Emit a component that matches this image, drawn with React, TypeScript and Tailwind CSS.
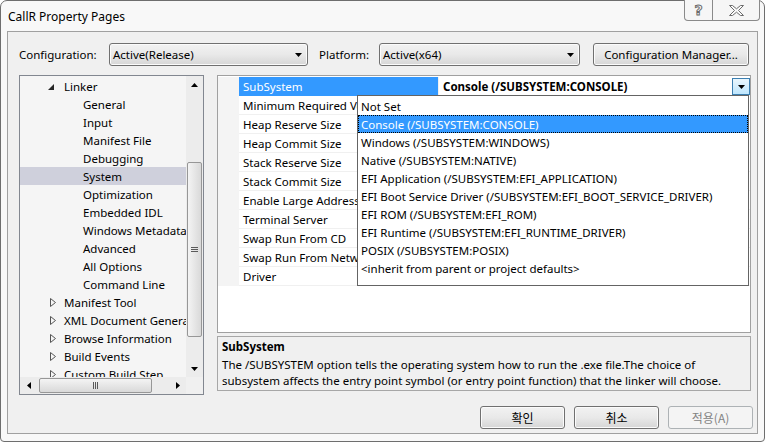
import React from "react";

const F = "font-['Noto_Sans','Noto_Sans_CJK_KR',sans-serif]";

function DownTri({ className = "" }: { className?: string }) {
  return (
    <svg width="7" height="4" viewBox="0 0 7 4" className={className}>
      <polygon points="0,0 7,0 3.5,4" fill="#000" />
    </svg>
  );
}

function UpTri() {
  return (
    <svg width="7" height="4" viewBox="0 0 7 4">
      <polygon points="0,4 7,4 3.5,0" fill="#000" />
    </svg>
  );
}

function LeftTri() {
  return (
    <svg width="4" height="7" viewBox="0 0 4 7">
      <polygon points="4,0 4,7 0,3.5" fill="#000" />
    </svg>
  );
}

function RightTri() {
  return (
    <svg width="4" height="7" viewBox="0 0 4 7">
      <polygon points="0,0 0,7 4,3.5" fill="#000" />
    </svg>
  );
}

function Combo({ text, w }: { text: string; w: string }) {
  return (
    <div
      className={`${w} h-[23px] rounded-[3px] border border-[#707070] bg-gradient-to-b from-[#f2f2f2] via-[#e9e9e9] to-[#d6d6d6] shadow-[inset_0_0_0_1px_#fbfbfb] flex items-center justify-between pl-[3px] pr-[5px] pt-[1px]`}
    >
      <span className="leading-none">{text}</span>
      <DownTri />
    </div>
  );
}

function WinButton({ label, w, disabled }: { label: string; w: string; disabled?: boolean }) {
  return (
    <div
      className={`${w} h-[23px] rounded-[3px] border flex items-center justify-center pt-[1px] ${
        disabled
          ? "border-[#adb2b5] bg-[#f4f4f4] text-[#838383]"
          : "border-[#707070] bg-gradient-to-b from-[#f2f2f2] via-[#e9e9e9] to-[#d6d6d6] shadow-[inset_0_0_0_1px_#fbfbfb] text-black"
      }`}
    >
      <span className="leading-none">{label}</span>
    </div>
  );
}

type TreeItem = { t: string; lvl: 1 | 2; exp?: "open" | "closed"; sel?: boolean };

const tree: TreeItem[] = [
  { t: "Linker", lvl: 1, exp: "open" },
  { t: "General", lvl: 2 },
  { t: "Input", lvl: 2 },
  { t: "Manifest File", lvl: 2 },
  { t: "Debugging", lvl: 2 },
  { t: "System", lvl: 2, sel: true },
  { t: "Optimization", lvl: 2 },
  { t: "Embedded IDL", lvl: 2 },
  { t: "Windows Metadata", lvl: 2 },
  { t: "Advanced", lvl: 2 },
  { t: "All Options", lvl: 2 },
  { t: "Command Line", lvl: 2 },
  { t: "Manifest Tool", lvl: 1, exp: "closed" },
  { t: "XML Document Generator", lvl: 1, exp: "closed" },
  { t: "Browse Information", lvl: 1, exp: "closed" },
  { t: "Build Events", lvl: 1, exp: "closed" },
  { t: "Custom Build Step", lvl: 1, exp: "closed" },
];

const props = [
  "SubSystem",
  "Minimum Required Version",
  "Heap Reserve Size",
  "Heap Commit Size",
  "Stack Reserve Size",
  "Stack Commit Size",
  "Enable Large Addresses",
  "Terminal Server",
  "Swap Run From CD",
  "Swap Run From Network",
  "Driver",
];

const options = [
  "Not Set",
  "Console (/SUBSYSTEM:CONSOLE)",
  "Windows (/SUBSYSTEM:WINDOWS)",
  "Native (/SUBSYSTEM:NATIVE)",
  "EFI Application (/SUBSYSTEM:EFI_APPLICATION)",
  "EFI Boot Service Driver (/SUBSYSTEM:EFI_BOOT_SERVICE_DRIVER)",
  "EFI ROM (/SUBSYSTEM:EFI_ROM)",
  "EFI Runtime (/SUBSYSTEM:EFI_RUNTIME_DRIVER)",
  "POSIX (/SUBSYSTEM:POSIX)",
  "<inherit from parent or project defaults>",
];

function Tree() {
  return (
    <div className="w-[185px] h-[320px] border border-[#828790] bg-[#f5f5f5] flex flex-col shrink-0">
      <div className="flex h-[301px]">
        <div className="flex-1 overflow-hidden pt-[1px]">
          {tree.map((it) => (
            <div
              key={it.t}
              className={`h-[18px] flex items-center whitespace-nowrap relative pt-[2px] ${
                it.lvl === 1 ? "pl-[44px]" : "pl-[63px]"
              } ${it.sel ? "bg-[#cfd0dc]" : ""}`}
            >
              {it.exp === "open" && (
                <svg width="6" height="6" viewBox="0 0 6 6" className="absolute left-[28px] top-[7px]">
                  <polygon points="6,0 6,6 0,6" fill="#262626" />
                </svg>
              )}
              {it.exp === "closed" && (
                <svg width="6" height="9" viewBox="0 0 6 9" className="absolute left-[30px] top-[5px]">
                  <polygon points="0.5,0.5 0.5,8.5 5.5,4.5" fill="none" stroke="#555" strokeWidth="1" />
                </svg>
              )}
              <span className="leading-none">{it.t}</span>
            </div>
          ))}
        </div>
        <div className="w-[17px] h-full bg-[#ececec] flex flex-col">
          <div className="h-[17px] flex items-center justify-center">
            <UpTri />
          </div>
          <div className="h-[69px]" />
          <div className="h-[175px] mx-[1px] rounded-[2px] border border-[#979797] bg-gradient-to-r from-[#f4f4f4] to-[#d9d9d9] flex flex-col items-center justify-center gap-[1px]">
            <div className="w-[7px] h-px bg-[#5a5a5a]" />
            <div className="w-[7px] h-px bg-[#5a5a5a]" />
            <div className="w-[7px] h-px bg-[#5a5a5a]" />
          </div>
          <div className="flex-1" />
          <div className="h-[17px] flex items-center justify-center">
            <DownTri />
          </div>
        </div>
      </div>
      <div className="flex h-[17px]">
        <div className="flex-1 flex bg-[#ececec]">
          <div className="w-[17px] flex items-center justify-center">
            <LeftTri />
          </div>
          <div className="w-[2px]" />
          <div className="w-[113px] my-[1px] rounded-[2px] border border-[#979797] bg-gradient-to-b from-[#f4f4f4] to-[#d9d9d9] flex items-center justify-center gap-[1px]">
            <div className="h-[7px] w-px bg-[#5a5a5a]" />
            <div className="h-[7px] w-px bg-[#5a5a5a]" />
            <div className="h-[7px] w-px bg-[#5a5a5a]" />
          </div>
          <div className="flex-1" />
          <div className="w-[17px] flex items-center justify-center">
            <RightTri />
          </div>
        </div>
        <div className="w-[17px] bg-[#f0f0f0]" />
      </div>
    </div>
  );
}

function Grid() {
  return (
    <div className="relative h-[258px] border border-[#a0a0a0] bg-white pt-[1px]">
      {props.map((p, i) => {
        const sel = i === 0;
        return (
          <div key={p} className="flex h-[19px]">
            <div className="w-[21px] h-full bg-[#f4f4f4]" />
            <div
              className={`w-[199px] h-full flex items-center pl-[4px] pt-[2px] whitespace-nowrap overflow-hidden border-b ${
                sel ? "bg-[#3399ff] text-white border-[#3399ff]" : "border-[#f0f0f0]"
              }`}
            >
              <span className="leading-none">{p}</span>
            </div>
            <div className="w-px h-full bg-[#f0f0f0]" />
            <div className="flex-1 h-full border-b border-[#f0f0f0] flex items-center justify-between pl-[4px]">
              {sel && (
                <>
                  <span className="leading-none font-bold pt-[2px]">Console (/SUBSYSTEM:CONSOLE)</span>
                  <div className="w-[18px] h-[17px] self-start mt-[1px] border border-[#3c7fb1] bg-gradient-to-b from-[#eaf6fd] to-[#bee6fd] flex items-center justify-center">
                    <DownTri />
                  </div>
                </>
              )}
            </div>
          </div>
        );
      })}
      <div className="absolute left-[139px] top-[19px] w-[392px] h-[191px] border border-[#646464] bg-white pt-[1px]">
        {options.map((o, i) => (
          <div
            key={o}
            className={`h-[18px] flex items-center pl-[3px] pt-[2px] whitespace-nowrap ${
              i === 1 ? "bg-[#3399ff] text-white outline-1 outline-dotted outline-black -outline-offset-1" : ""
            }`}
          >
            <span className="leading-none">{o}</span>
          </div>
        ))}
      </div>
    </div>
  );
}

export default function App() {
  return (
    <div className={`w-[770px] h-[443px] bg-white overflow-hidden text-[11.5px] text-black ${F}`}>
      <div className="relative w-[765px] h-[442px] rounded-t-[7px] rounded-b-[4px] border border-[#6e6e6e] bg-[#f8f8f8] flex flex-col">
        <div className="h-[30px] shrink-0 flex items-center pl-[7px] pt-[1px] text-[12px] text-black">
          CallR Property Pages
        </div>
        <div className="absolute top-[-1px] right-[4px] h-[21px] flex border border-t-0 border-[#8a8a8a] rounded-b-[4px] bg-[#f6f6f6] overflow-hidden">
          <div className="w-[28px] flex items-center justify-center border-r border-[#8a8a8a]">
            <span className="text-[14px] font-bold leading-none text-transparent [-webkit-text-stroke:1px_#6b6b6b] font-['DejaVu_Sans',sans-serif]">
              ?
            </span>
          </div>
          <div className="w-[46px] flex items-center justify-center">
            <svg width="15" height="11" viewBox="0 0 15 11">
              <polygon
                points="0.5,0.5 3.5,0.5 7.5,3.8 11.5,0.5 14.5,0.5 9.5,5.5 14.5,10.5 11.5,10.5 7.5,7.2 3.5,10.5 0.5,10.5 5.5,5.5"
                fill="#fafafa"
                stroke="#6b6b6b"
                strokeWidth="1"
              />
            </svg>
          </div>
        </div>
        <div className="ml-[6px] w-[751px] h-[403px] border border-[#a0a0a0] bg-[#f0f0f0] flex flex-col">
          <div className="flex items-center pt-[11px] pl-[11px] shrink-0">
            <div className="w-[90px] pt-[1px]">Configuration:</div>
            <Combo text="Active(Release)" w="w-[199px]" />
            <div className="w-[60px] ml-[11px] pt-[1px]">Platform:</div>
            <Combo text="Active(x64)" w="w-[201px]" />
            <div className="ml-[13px]">
              <WinButton label="Configuration Manager..." w="w-[156px]" />
            </div>
          </div>
          <div className="flex pl-[11px] mt-[9px] shrink-0">
            <Tree />
            <div className="ml-[13px] w-[534px] flex flex-col">
              <Grid />
              <div className="mt-[3px] h-[55px] border border-[#a7a7a7] bg-[#f0f0f0] pl-[4px] pt-[2px] leading-[16px] whitespace-nowrap overflow-hidden">
                <div className="font-bold">SubSystem</div>
                <div className="mt-[2px]">
                  The /SUBSYSTEM option tells the operating system how to run the .exe file.The choice of
                  <br />
                  subsystem affects the entry point symbol (or entry point function) that the linker will choose.
                </div>
              </div>
            </div>
          </div>
          <div className={`flex justify-end gap-[9px] pr-[4px] mt-[11px] text-[12px] font-['Noto_Sans_CJK_KR','Noto_Sans',sans-serif]`}>
            <WinButton label="확인" w="w-[85px]" />
            <WinButton label="취소" w="w-[85px]" />
            <WinButton label="적용(A)" w="w-[85px]" disabled />
          </div>
        </div>
      </div>
    </div>
  );
}
